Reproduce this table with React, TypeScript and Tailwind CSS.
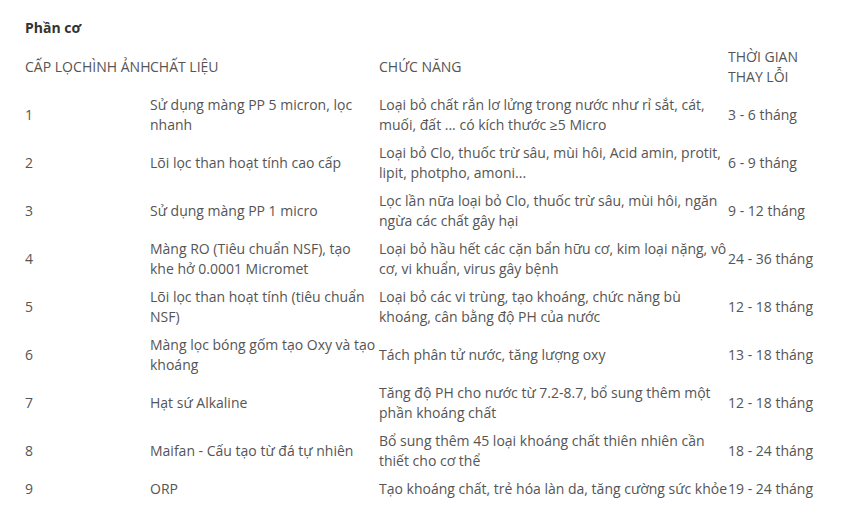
const rows = [
  ["1", "Sử dụng màng PP 5 micron, lọc nhanh", "Loại bỏ chất rắn lơ lửng trong nước như rỉ sắt, cát, muối, đất ... có kích thước ≥5 Micro", "3 - 6 tháng"],
  ["2", "Lõi lọc than hoạt tính cao cấp", "Loại bỏ Clo, thuốc trừ sâu, mùi hôi, Acid amin, protit, lipit, photpho, amoni...", "6 - 9 tháng"],
  ["3", "Sử dụng màng PP 1 micro", "Lọc lần nữa loại bỏ Clo, thuốc trừ sâu, mùi hôi, ngăn ngừa các chất gây hại", "9 - 12 tháng"],
  ["4", "Màng RO (Tiêu chuẩn NSF), tạo khe hở 0.0001 Micromet", "Loại bỏ hầu hết các cặn bẩn hữu cơ, kim loại nặng, vô cơ, vi khuẩn, virus gây bệnh", "24 - 36 tháng"],
  ["5", "Lõi lọc than hoạt tính (tiêu chuẩn NSF)", "Loại bỏ các vi trùng, tạo khoáng, chức năng bù khoáng, cân bằng độ PH của nước", "12 - 18 tháng"],
  ["6", "Màng lọc bóng gốm tạo Oxy và tạo khoáng", "Tách phân tử nước, tăng lượng oxy", "13 - 18 tháng"],
  ["7", "Hạt sứ Alkaline", "Tăng độ PH cho nước từ 7.2-8.7, bổ sung thêm một phần khoáng chất", "12 - 18 tháng"],
  ["8", "Maifan - Cấu tạo từ đá tự nhiên", "Bổ sung thêm 45 loại khoáng chất thiên nhiên cần thiết cho cơ thể", "18 - 24 tháng"],
  ["9", "ORP", "Tạo khoáng chất, trẻ hóa làn da, tăng cường sức khỏe", "19 - 24 tháng"],
];

export default function App() {
  return (
    <div className="min-h-screen bg-white pl-[25px] pt-[18px] font-['Open_Sans',sans-serif] text-[14px] leading-[20px] text-[#555]">
      <p className="mb-[5px] font-bold text-[#333]">Phần cơ</p>
      <table className="w-[789px] table-fixed border-collapse">
        <thead>
          <tr>
            <th className="w-[57px] whitespace-nowrap py-1 text-left font-normal">CẤP LỌC</th>
            <th className="w-[68px] whitespace-nowrap py-1 text-left font-normal">HÌNH ẢNH</th>
            <th className="w-[229px] py-1 text-left font-normal">CHẤT LIỆU</th>
            <th className="w-[349px] py-1 text-left font-normal">CHỨC NĂNG</th>
            <th className="py-1 text-left font-normal">THỜI GIAN THAY LỖI</th>
          </tr>
        </thead>
        <tbody>
          {rows.map((r) => (
            <tr key={r[0]}>
              <td className="py-1 align-middle">{r[0]}</td>
              <td className="py-1"></td>
              <td className="py-1 pr-[2px] align-middle">{r[1]}</td>
              <td className="py-1 align-middle">{r[2]}</td>
              <td className="py-1 align-middle">{r[3]}</td>
            </tr>
          ))}
        </tbody>
      </table>
    </div>
  );
}
